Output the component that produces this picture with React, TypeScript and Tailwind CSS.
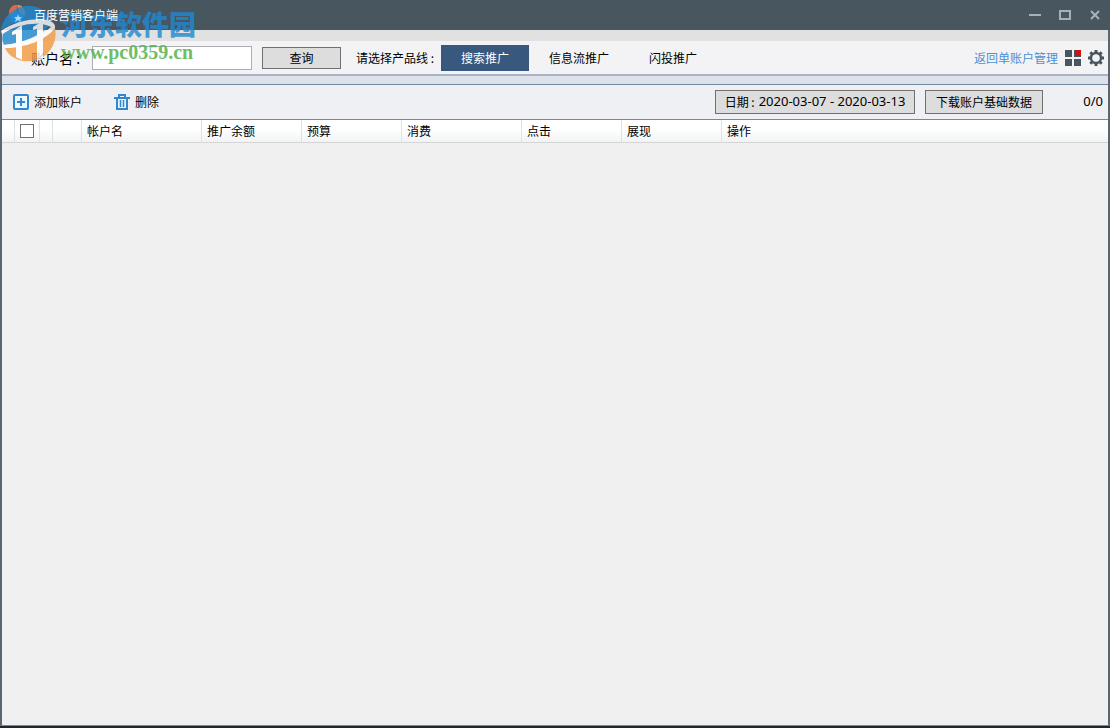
import React, { useState } from "react";

const PRODUCTS = ["搜索推广", "信息流推广", "闪投推广"];

const COLUMNS = [
  { title: "帐户名", width: "w-[120px]" },
  { title: "推广余额", width: "w-[100px]" },
  { title: "预算", width: "w-[100px]" },
  { title: "消费", width: "w-[120px]" },
  { title: "点击", width: "w-[100px]" },
  { title: "展现", width: "w-[100px]" },
  { title: "操作", width: "" },
];

const CELL = "border-r border-[#dfe1e3]";

function TitleBar() {
  return (
    <header className="flex h-[30px] items-center bg-[#485660] pl-2 pr-2">
      <svg width="18" height="20" viewBox="0 0 18 20" className="shrink-0">
        <path d="M2 12A7 8 0 0 1 9 0v5z" fill="#d9694f" />
        <path d="M9 0a7 8 0 0 1 7 12l-5-5z" fill="#d98a52" />
        <path d="M2 10a7 8 0 0 0 14 0l-7-3z" fill="#2f8fd6" />
      </svg>
      <h1 className="relative z-10 ml-2 grow text-xs text-white">百度营销客户端</h1>
      <div className="flex items-center gap-4 text-[#a9b1b8]">
        <button aria-label="最小化">
          <svg width="14" height="14" viewBox="0 0 14 14" className="block">
            <path d="M1 7h12" stroke="currentColor" strokeWidth="2" />
          </svg>
        </button>
        <button aria-label="最大化">
          <svg width="14" height="14" viewBox="0 0 14 14" className="block">
            <path d="M2 3h10v8H2z" fill="none" stroke="currentColor" strokeWidth="2" />
          </svg>
        </button>
        <button aria-label="关闭">
          <svg width="14" height="14" viewBox="0 0 14 14" className="block">
            <path d="M3 3l8 8M11 3l-8 8" stroke="currentColor" strokeWidth="2" />
          </svg>
        </button>
      </div>
    </header>
  );
}

function SearchBar() {
  const [product, setProduct] = useState(PRODUCTS[0]);

  return (
    <div className="flex h-[35px] items-center border-b-2 border-[#a9b2c2] bg-[#f3f3f5] pl-[29px] pr-1">
      <label htmlFor="account" className="w-[61px] text-sm whitespace-nowrap">
        账户名 :
      </label>
      <input
        id="account"
        className="h-6 w-40 border border-[#abadb3] bg-white px-1 outline-none"
      />
      <button className="ml-[10px] h-[22px] w-[79px] border border-[#707070] bg-[#dddddd]">
        查询
      </button>
      <span className="ml-[15px] w-[85px] whitespace-nowrap">请选择产品线 :</span>
      <nav className="flex">
        {PRODUCTS.map((name) => (
          <button
            key={name}
            onClick={() => setProduct(name)}
            className={
              product === name
                ? "h-[26px] w-[88px] bg-[#38587d] text-white"
                : "h-[26px] px-5"
            }
          >
            {name}
          </button>
        ))}
      </nav>
      <div className="ml-auto flex items-center">
        <a href="#single" className="text-[#4a90d6]">
          返回单账户管理
        </a>
        <button aria-label="应用" className="ml-[7px]">
          <svg width="16" height="16" viewBox="0 0 16 16" className="block">
            <path d="M0 0h7v7H0zM0 9h7v7H0zM9 9h7v7H9zM9 0h7v7H9z" fill="#485660" />
            <path d="M10 0h6v6h-6z" fill="#cc1216" />
          </svg>
        </button>
        <button aria-label="设置" className="ml-[7px]">
          <svg width="16" height="16" viewBox="0 0 16 16" className="block" stroke="#485660">
            <circle cx="8" cy="8" r="5" fill="none" strokeWidth="2.4" />
            <path
              d="M8 0v3M8 13v3M0 8h3M13 8h3M2.3 2.3l2.2 2.2M11.5 11.5l2.2 2.2M2.3 13.7l2.2-2.2M11.5 4.5l2.2-2.2"
              strokeWidth="3"
            />
          </svg>
        </button>
      </div>
    </div>
  );
}

function ActionBar() {
  return (
    <div className="flex h-9 items-center border-y border-[#7189a3] bg-[#eef0f3] pl-[11px] pr-[5px]">
      <button className="flex items-center gap-[5px]">
        <svg width="16" height="16" viewBox="0 0 16 16" fill="none" stroke="#2f87d3">
          <rect x="1" y="1" width="14" height="14" rx="1" strokeWidth="2" fill="#eef8ff" />
          <path d="M8 4v8M4 8h8" strokeWidth="2" />
        </svg>
        添加账户
      </button>
      <button className="ml-8 flex items-center gap-[5px]">
        <svg width="16" height="16" viewBox="0 0 16 16" fill="none" stroke="#2f87d3">
          <path d="M0 4h16M5 3V1h6v2M3 4v11h10V4" strokeWidth="2" />
          <path d="M6.5 6v7M9.5 6v7" strokeWidth="1.5" />
        </svg>
        删除
      </button>
      <button className="ml-auto flex h-6 w-[200px] items-center justify-center gap-1 border border-[#707070] bg-[#dddddd] whitespace-nowrap">
        <span>日期 :</span>
        <span className="font-['Noto_Sans',sans-serif] text-[13px]">2020-03-07 - 2020-03-13</span>
      </button>
      <button className="ml-[10px] h-6 w-[118px] border border-[#707070] bg-[#dddddd]">
        下载账户基础数据
      </button>
      <span className="w-[60px] text-right font-['Noto_Sans',sans-serif] text-[13px]">0/0</span>
    </div>
  );
}

function AccountTable() {
  return (
    <table className="w-full table-fixed border-separate border-spacing-0">
      <thead>
        <tr className="h-[23px] bg-linear-to-b from-white from-40% to-[#f1f2f4] [&>*]:border-b [&>*]:border-b-[#d5d5d5]">
          <td className={`w-[13px] ${CELL}`} />
          <th className={`w-[25px] p-0 pl-[5px] ${CELL}`}>
            <input
              type="checkbox"
              aria-label="全选"
              className="block size-[14px] appearance-none border border-[#707070] bg-white checked:bg-[#38587d]"
            />
          </th>
          <td className={`w-[13px] ${CELL}`} />
          <td className={`w-[29px] ${CELL}`} />
          {COLUMNS.map(({ title, width }) => (
            <th
              key={title}
              scope="col"
              className={`p-0 pl-[5px] text-left font-normal ${width} ${width && CELL}`}
            >
              {title}
            </th>
          ))}
        </tr>
      </thead>
      <tbody />
    </table>
  );
}

function Watermark() {
  return (
    <div className="pointer-events-none absolute left-0 top-0 flex opacity-80">
      <svg width="58" height="64" viewBox="0 0 58 64" className="shrink-0">
        {/* blue upper half, orange lower half */}
        <path
          d="M1 30C3 16 15 6 29 6c11 0 19 6 23 16-12-5-36-3-51 8z"
          fill="#2089d2"
        />
        <path d="M3 34c12-9 30-13 46-8-8 9-26 17-45 19-2-4-2-7-1-11z" fill="#2089d2" />
        <path
          d="M5 48c16-1 36-8 46-19l4-1c3 13-5 28-18 32-14 4-27-1-32-12z"
          fill="#f39a3d"
        />
        <path d="M1 31C16 20 41 16 52 22c3 2 4 5 2 8-5-9-33-9-52 4z" fill="#fff" />
        <path d="M4 45c17-1 37-9 47-18l3 2c-8 11-29 19-49 19z" fill="#fff" />
        {/* uprights */}
        <path d="M12 32l10-7v35l-6-3V34l-4 1zM33 27l10-6v38l-6 2V29l-4 1z" fill="#fff" />
        <path d="M18 14l1 3h3l-2 2 1 3-3-2-3 2 1-3-2-2h3z" fill="#cfe6f6" />
      </svg>
      <div className="ml-[3px] pt-2">
        <p className="text-[27px] leading-8 font-black text-[#2089d2]">河东软件园</p>
        <p className="font-['Liberation_Serif',serif] text-[20px] leading-6 font-bold text-[#4caf3f]">
          www.pc0359.cn
        </p>
      </div>
    </div>
  );
}

function App() {
  return (
    <div className="relative flex min-h-screen flex-col border-b-2 border-[#22282d] bg-[#f0f0f0] font-['Noto_Sans_CJK_SC',sans-serif] text-xs text-black">
      <TitleBar />
      <div className="flex grow flex-col border-x-2 border-b border-[#5b6670] border-b-[#7189a3]">
        <div className="h-[11px] bg-[#e1e1e1]" />
        <SearchBar />
        <div className="h-2 bg-[#dde1e9]" />
        <ActionBar />
        <AccountTable />
      </div>
      <Watermark />
    </div>
  );
}

export default App;
